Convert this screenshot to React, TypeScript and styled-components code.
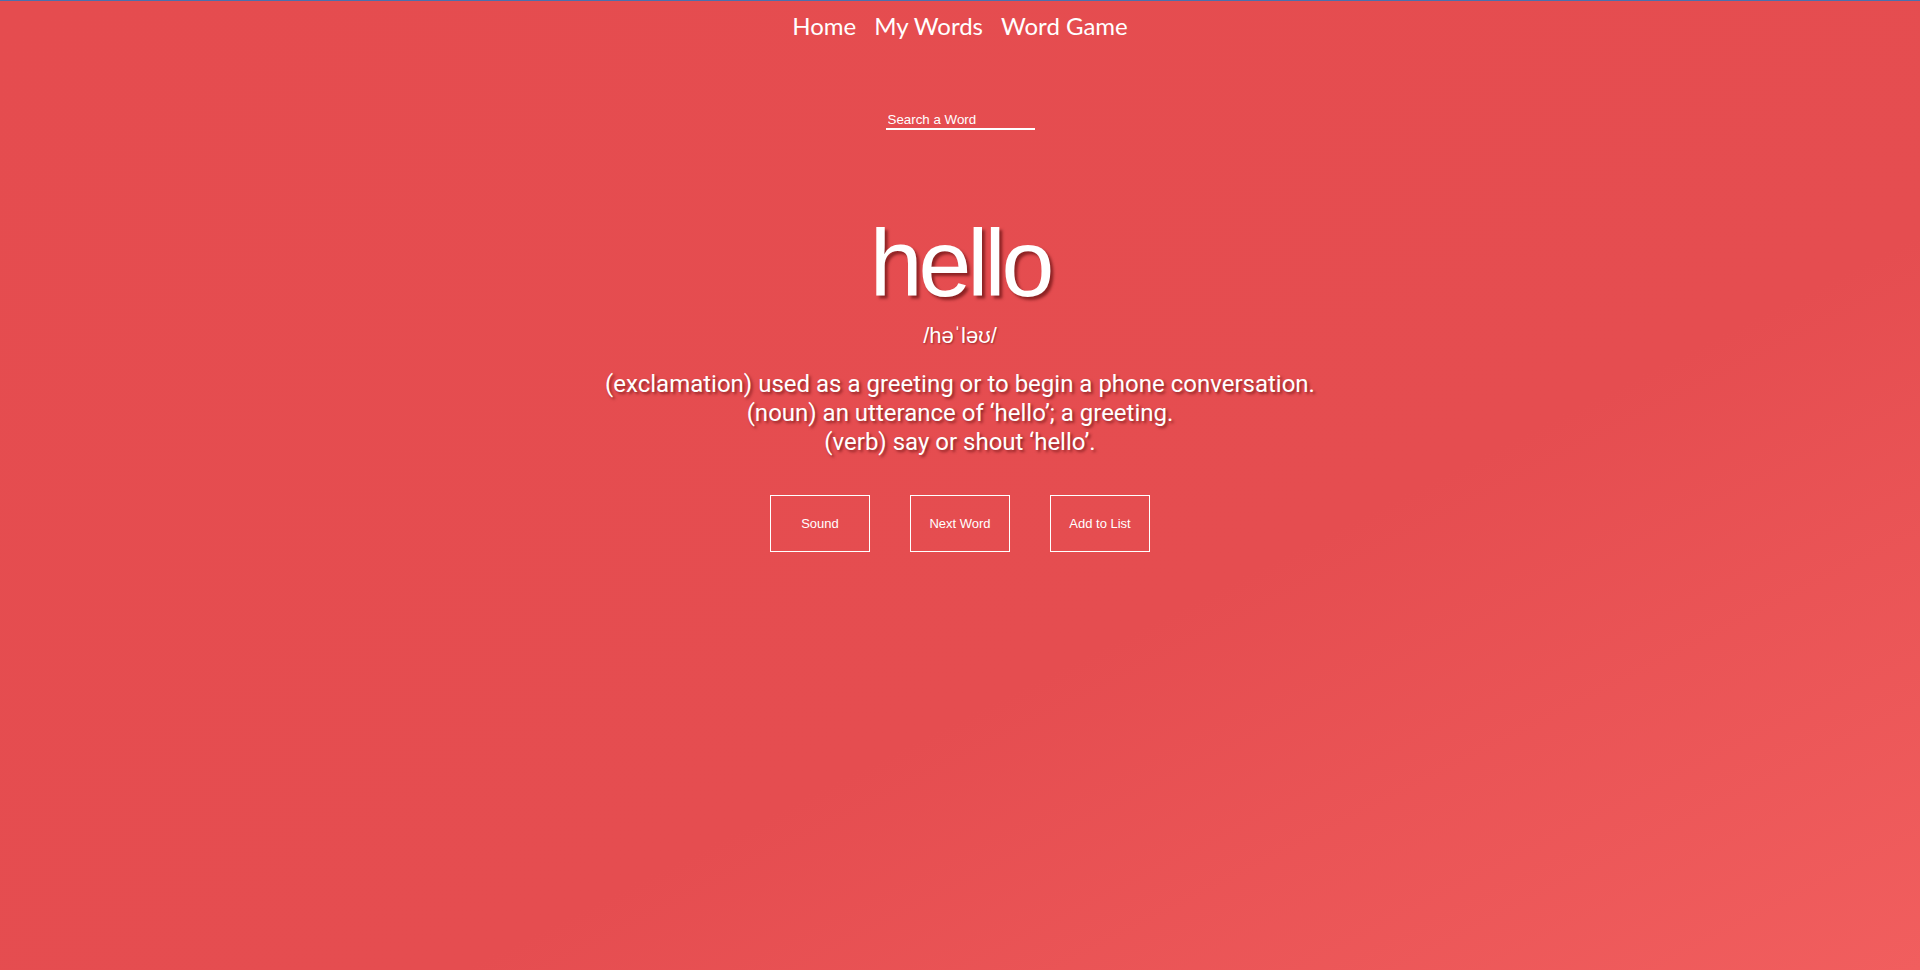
import React from 'react';
import styled, { createGlobalStyle } from 'styled-components';

const GlobalStyle = createGlobalStyle`
  html, body {
    margin: 0;
    padding: 0;
  }
  body {
    font-family: "Liberation Sans", Arial, sans-serif;
  }
`;

const Page = styled.div`
  min-height: 100vh;
  box-sizing: border-box;
  border-top: 1px solid #4b70ad;
  background: linear-gradient(to bottom right, #e54c4f 0%, #e54d50 62%, #f15e5e 100%);
  color: #fff;
  display: flex;
  flex-direction: column;
  align-items: center;
`;

const Nav = styled.nav`
  display: flex;
  gap: 18px;
  padding-top: 10px;
`;

const NavLink = styled.a`
  font-family: "Lato", "Open Sans", sans-serif;
  font-size: 24px;
  color: #fff;
  text-decoration: none;
  cursor: pointer;
`;

const SearchInput = styled.input`
  margin-top: 71px;
  width: 149px;
  box-sizing: border-box;
  padding: 1px 2px;
  border: none;
  border-bottom: 2px solid #fff;
  background: transparent;
  color: #fff;
  font-family: "Liberation Sans", Arial, sans-serif;
  font-size: 13.33px;
  outline: none;

  &::placeholder {
    color: #fff;
    opacity: 1;
  }
`;

const Word = styled.h1`
  margin: 86px 0 0;
  font-family: "Liberation Sans", Arial, sans-serif;
  font-size: 95px;
  line-height: 95px;
  font-weight: 400;
  letter-spacing: -4px;
  text-shadow: 3px 3px 3px rgba(70, 0, 0, 0.55);
`;

const Phonetic = styled.div`
  margin-top: 14px;
  font-family: "Liberation Sans", Arial, sans-serif;
  font-size: 22px;
  line-height: 22px;
  text-shadow: 1px 1px 2px rgba(70, 0, 0, 0.45);
`;

const Definitions = styled.div`
  margin-top: 23px;
  font-family: Roboto, "Liberation Sans", sans-serif;
  font-size: 24px;
  line-height: 29px;
  text-align: center;
  text-shadow: 2px 2px 3px rgba(70, 0, 0, 0.55);
`;

const Actions = styled.div`
  margin-top: 38px;
  display: flex;
  gap: 40px;
`;

const ActionButton = styled.button`
  width: 100px;
  height: 57px;
  box-sizing: border-box;
  border: 1px solid #fff;
  background: transparent;
  color: #fff;
  font-family: "Liberation Sans", Arial, sans-serif;
  font-size: 13px;
  cursor: pointer;
`;

const definitions = [
  '(exclamation) used as a greeting or to begin a phone conversation.',
  '(noun) an utterance of \u2018hello\u2019; a greeting.',
  '(verb) say or shout \u2018hello\u2019.',
];

export default function App() {
  return (
    <>
      <GlobalStyle />
      <Page>
        <Nav>
          <NavLink>Home</NavLink>
          <NavLink>My Words</NavLink>
          <NavLink>Word Game</NavLink>
        </Nav>
        <SearchInput placeholder="Search a Word" />
        <Word>hello</Word>
        <Phonetic>/həˈləʊ/</Phonetic>
        <Definitions>
          {definitions.map((d) => (
            <div key={d}>{d}</div>
          ))}
        </Definitions>
        <Actions>
          <ActionButton>Sound</ActionButton>
          <ActionButton>Next Word</ActionButton>
          <ActionButton>Add to List</ActionButton>
        </Actions>
      </Page>
    </>
  );
}
